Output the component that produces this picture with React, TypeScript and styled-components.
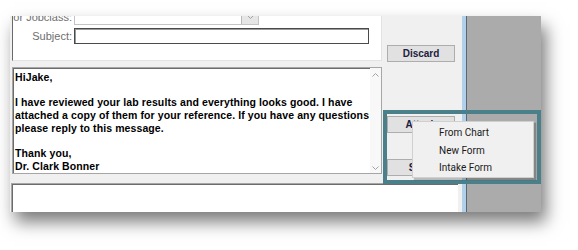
import React from 'react';
import styled, { createGlobalStyle } from 'styled-components';

const GlobalStyle = createGlobalStyle`
	html, body {
		margin: 0;
		padding: 0;
		background: #ffffff;
		font-family: "Liberation Sans", Arial, sans-serif;
	}
`;

const Page = styled.div`
	width: 578px;
	height: 250px;
	padding: 16px 0 0 10px;
	box-sizing: border-box;
	overflow: hidden;
	background: #ffffff;
`;

const Window = styled.div`
	position: relative;
	display: flex;
	width: 531px;
	height: 196px;
	background: #f0f0f0;
	box-shadow: 5px 10px 16px rgba(0, 0, 0, 0.52);
	overflow: hidden;
`;

const MainArea = styled.div`
	flex: 0 0 452px;
	display: flex;
	flex-direction: column;
	min-width: 0;
`;

const TopRow = styled.div`
	display: flex;
`;

const LeftColumn = styled.div`
	flex: 0 0 370px;
	min-width: 0;
	margin-left: 2px;
	display: flex;
	flex-direction: column;
	gap: 6px;
`;

const FormPanel = styled.div`
	height: 45px;
	box-sizing: border-box;
	background: #ffffff;
	border-left: 1px solid #6a6a6a;
	border-bottom: 1px solid #e3e3e3;
	border-right: 1px solid #e3e3e3;
	overflow: hidden;
`;

const FormRows = styled.div`
	margin-top: -7px;
	display: flex;
	flex-direction: column;
	gap: 3px;
`;

const FormRow = styled.div`
	display: flex;
	align-items: center;
	height: 16px;
`;

const Label = styled.span`
	flex: 0 0 59px;
	padding-right: 2px;
	text-align: right;
	font-size: 11px;
	color: #6e6e6e;
	white-space: nowrap;
`;

const Select = styled.div`
	display: flex;
	width: 185px;
	height: 16px;
	box-sizing: border-box;
	border: 1px solid #c4c4c4;
	background: #ffffff;

	.value {
		flex: 1;
	}

	.arrow {
		flex: 0 0 16px;
		display: flex;
		align-items: center;
		justify-content: center;
		background: #e6e6e6;
		border-left: 1px solid #b9b9b9;
	}
`;

const TextInput = styled.div`
	width: 295px;
	height: 16px;
	box-sizing: border-box;
	border: 1px solid #4a4a4a;
	box-shadow: inset 1px 1px 0 #9a9a9a;
	background: #ffffff;
`;

const MessageBox = styled.div`
	display: flex;
	height: 107px;
	box-sizing: border-box;
	background: #ffffff;
	border: 1px solid #a6a6a6;
	box-shadow: inset 1px 1px 0 #6c6c6c;
`;

const MessageText = styled.div`
	flex: 1;
	min-width: 0;
	padding: 3px 0 0 2px;
	font-size: 10.5px;
	font-weight: 700;
	letter-spacing: 0.1px;
	line-height: 12.7px;
	color: #000000;
	white-space: nowrap;
	overflow: hidden;

	p {
		margin: 0 0 12.7px;
	}
`;

const ScrollBar = styled.div`
	flex: 0 0 11px;
	display: flex;
	flex-direction: column;
	justify-content: space-between;
	align-items: center;
	padding: 5px 0 3px;
	background: #f8f8f8;
`;

const ButtonColumn = styled.div`
	flex: 0 0 79px;
	display: flex;
	flex-direction: column;
	padding-left: 5px;
	box-sizing: border-box;
`;

const Button = styled.div<{ $top: number }>`
	margin-top: ${props => props.$top}px;
	width: 68px;
	height: 17px;
	box-sizing: border-box;
	display: flex;
	align-items: center;
	justify-content: center;
	background: #e1e1e1;
	border: 1px solid #adadad;
	font-size: 10px;
	font-weight: 700;
	color: #1d2040;
`;

const LowerBox = styled.div`
	flex: 1;
	margin: 7px 0 0 1px;
	width: 446px;
	background: #ffffff;
	border-top: 1px solid #a6a6a6;
	border-left: 1px solid #a6a6a6;
	box-shadow: inset 1px 1px 0 #6c6c6c;
`;

const Splitter = styled.div`
	flex: 0 0 4px;
	background: #b1d0ea;
	border-right: 1px solid #5c6670;
`;

const GrayPane = styled.div`
	flex: 1;
	background: #ababab;
`;

const Highlight = styled.div`
	position: absolute;
	left: 373px;
	top: 94px;
	width: 158px;
	height: 74px;
	box-sizing: border-box;
	border: 4px solid #4b7f89;
	pointer-events: none;
`;

const Menu = styled.div`
	position: absolute;
	left: 402px;
	top: 105px;
	width: 122px;
	height: 57px;
	box-sizing: border-box;
	padding-top: 2px;
	background: #f0f0f0;
	border: 1px solid #d0d0d0;
	box-shadow: 2px 2px 1px rgba(0, 0, 0, 0.22);
`;

const MenuItem = styled.div`
	padding-left: 26px;
	height: 17.5px;
	line-height: 17.5px;
	font-family: "Segoe UI", Roboto, sans-serif;
	font-size: 10px;
	color: #1a1a1a;
	white-space: nowrap;
`;

const Chevron = ({ up }: { up?: boolean }) => (
	<svg width="7" height="4" viewBox="0 0 7 4">
		<path d={up ? 'M0.5 3.5 L3.5 0.5 L6.5 3.5' : 'M0.5 0.5 L3.5 3.5 L6.5 0.5'} fill="none" stroke="#a3a3a3" strokeWidth="1" />
	</svg>
);

const App = () => {
	const menuItems = ['From Chart', 'New Form', 'Intake Form'];

	return (
		<Page>
			<GlobalStyle />
			<Window>
				<MainArea>
					<TopRow>
						<LeftColumn>
							<FormPanel>
								<FormRows>
									<FormRow>
										<Label>or Jobclass:</Label>
										<Select>
											<div className="value" />
											<div className="arrow">
												<Chevron />
											</div>
										</Select>
									</FormRow>
									<FormRow>
										<Label>Subject:</Label>
										<TextInput />
									</FormRow>
								</FormRows>
							</FormPanel>
							<MessageBox>
								<MessageText>
									<p>HiJake,</p>
									<p>
										I have reviewed your lab results and everything looks good. I have<br />
										attached a copy of them for your reference. If you have any questions<br />
										please reply to this message.
									</p>
									<p>
										Thank you,<br />
										Dr. Clark Bonner
									</p>
								</MessageText>
								<ScrollBar>
									<Chevron up />
									<Chevron />
								</ScrollBar>
							</MessageBox>
						</LeftColumn>
						<ButtonColumn>
							<Button $top={29}>Discard</Button>
							<Button $top={54}>Attach</Button>
							<Button $top={26}>Send</Button>
						</ButtonColumn>
					</TopRow>
					<LowerBox />
				</MainArea>
				<Splitter />
				<GrayPane />
				<Highlight />
				<Menu>
					{menuItems.map(item => (
						<MenuItem key={item}>{item}</MenuItem>
					))}
				</Menu>
			</Window>
		</Page>
	);
};

export default App;
